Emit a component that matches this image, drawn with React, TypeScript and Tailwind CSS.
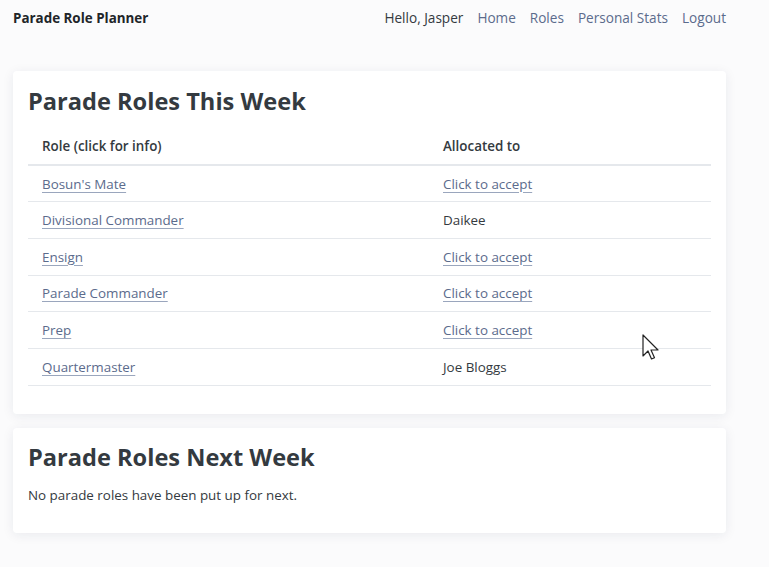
import React from 'react';

interface Role {
  name: string;
  allocated: string | null;
}

const thisWeek: Role[] = [
  { name: "Bosun's Mate", allocated: null },
  { name: 'Divisional Commander', allocated: 'Daikee' },
  { name: 'Ensign', allocated: null },
  { name: 'Parade Commander', allocated: null },
  { name: 'Prep', allocated: null },
  { name: 'Quartermaster', allocated: 'Joe Bloggs' },
];

const linkCls = 'text-[#5b6b8c] underline decoration-[#9aa6bd] underline-offset-[3px]';

export default function App() {
  return (
    <div
      className="relative min-h-[567px] bg-[#fbfbfc] text-[#343a40] text-[13.4px]"
      style={{ fontFamily: '"Open Sans", "Noto Sans", sans-serif' }}
    >
      {/* Navbar */}
      <header className="flex items-center justify-between h-[37px] pl-[13px] pr-[43px]">
        <span className="font-bold text-[13.4px] text-[#212529]">Parade Role Planner</span>
        <nav className="flex items-center gap-[14px] text-[13.6px]">
          <span className="text-[#343a40]">Hello, Jasper</span>
          <a className="text-[#5b6b8c]">Home</a>
          <a className="text-[#5b6b8c]">Roles</a>
          <a className="text-[#5b6b8c]">Personal Stats</a>
          <a className="text-[#5b6b8c]">Logout</a>
        </nav>
      </header>

      <main className="w-[713px] ml-[13px] mt-[34px] flex flex-col gap-[14px]">
        {/* This week */}
        <section className="bg-white rounded-[4px] shadow-[0_2px_12px_rgba(30,40,80,0.08)] px-[15px] pt-[13px] pb-[28px]">
          <h1 className="text-[23.6px] font-bold leading-[34px] text-[#343a40] mb-[11px]">Parade Roles This Week</h1>
          <table className="w-full border-collapse">
            <thead>
              <tr className="border-b-2 border-[#e5e8ec]">
                <th className="text-left font-semibold pl-[14px] h-[36px] w-[415px] align-middle">Role (click for info)</th>
                <th className="text-left font-semibold h-[36px] align-middle">Allocated to</th>
              </tr>
            </thead>
            <tbody>
              {thisWeek.map((r) => (
                <tr key={r.name} className="border-b border-[#e5e8ec]">
                  <td className="pl-[14px] h-[36.7px] align-middle">
                    <a className={linkCls}>{r.name}</a>
                  </td>
                  <td className="align-middle">
                    {r.allocated ? <span>{r.allocated}</span> : <a className={linkCls}>Click to accept</a>}
                  </td>
                </tr>
              ))}
            </tbody>
          </table>
        </section>

        {/* Next week */}
        <section className="bg-white rounded-[4px] shadow-[0_2px_12px_rgba(30,40,80,0.08)] px-[15px] pt-[12px] pb-[28px]">
          <h1 className="text-[23.6px] font-bold leading-[34px] text-[#343a40] mb-[11px]">Parade Roles Next Week</h1>
          <p>No parade roles have been put up for next.</p>
        </section>
      </main>

      {/* mouse cursor */}
      <svg className="absolute left-[642px] top-[334px]" width="18" height="28" viewBox="0 0 18 28">
        <path d="M1 1 L1 22 L6 17 L9.5 25 L12.5 23.7 L9 16 L16 16 Z" fill="white" stroke="#222" strokeWidth="1.2" strokeLinejoin="round" />
      </svg>
    </div>
  );
}
